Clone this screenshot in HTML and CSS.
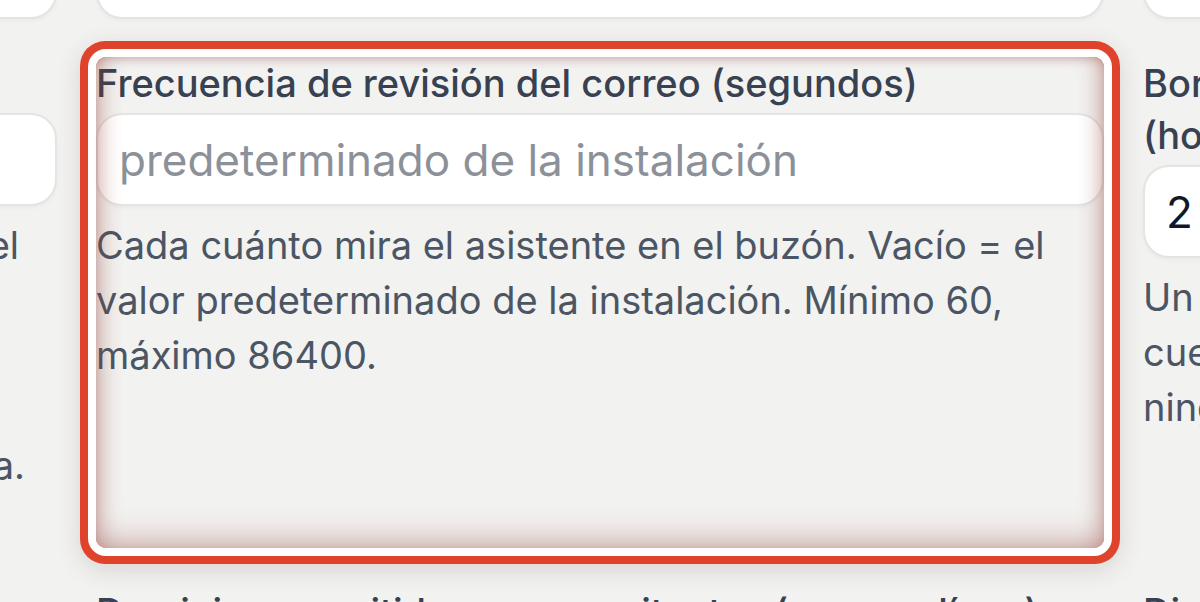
FILE: index.html
```html
<!DOCTYPE html>
<html lang="es">
<head>
<meta charset="utf-8">
<title>Ajustes del buzón</title>
<link rel="stylesheet" href="styles.css">
</head>
<body>
<div class="form-grid">
  <div class="field"><input class="input input-top" type="text" placeholder="imap.ejemplo.com"></div>
  <div class="field"><input class="input input-top" type="text"></div>
  <div class="field"><input class="input input-top" type="text"></div>

  <div class="field">
    <label class="label" for="carpeta">Carpeta</label>
    <input class="input" id="carpeta" type="text" placeholder="INBOX">
    <p class="hint hint-ends">
      <span class="ln">Carpeta IMAP que revisa el asistente en el</span>
      <span class="ln ln-off">servidor. Puede ser una subcarpeta</span>
      <span class="ln ln-off">separada con barra o punto, según</span>
      <span class="ln ln-off">el proveedor. Vacío = INBOX, la</span>
      <span class="ln ln-long">carpeta de entrada predeterminada.</span>
      <span class="ln ln-off">Distingue mayúsculas.</span>
    </p>
  </div>

  <div class="field field-focus">
    <label class="label" for="frecuencia">Frecuencia de revisión del correo (segundos)</label>
    <input class="input" id="frecuencia" type="text" placeholder="predeterminado de la instalación">
    <p class="hint">Cada cuánto mira el asistente en el buzón. Vacío = el valor predeterminado de la instalación. Mínimo 60, máximo 86400.</p>
  </div>

  <div class="field">
    <label class="label" for="borrar">Borrar borradores no enviados tras<br>(horas)</label>
    <input class="input input-value" id="borrar" type="text" value="2">
    <p class="hint">Un borrador sin revisar se elimina pasado este<br>cuenta de horas. Se aplica a todas las cuentas. 0 =<br>ninguno.</p>
  </div>

  <div class="field"><span class="label">Firma</span></div>
  <div class="field"><span class="label">Dominios permitidos para remitentes (uno por línea)</span></div>
  <div class="field"><span class="label">Dirección de respuesta</span></div>
</div>
</body>
</html>
```

FILE: styles.css
```css
* {
  box-sizing: border-box;
}

html,
body {
  margin: 0;
  height: 100%;
}

body {
  background: #f2f2f0;
  overflow: hidden;
  font-family: Inter, "Noto Sans", "Liberation Sans", sans-serif;
}

.form-grid {
  display: grid;
  grid-template-columns: repeat(3, 1008px);
  column-gap: 39px;
  row-gap: 38px;
  margin-left: -951px;
  margin-top: -74px;
}

.field {
  display: flex;
  flex-direction: column;
  min-width: 0;
}

.label {
  display: block;
  font-size: 38px;
  font-weight: 500;
  line-height: 52px;
  color: #374151;
}

.input {
  display: block;
  width: 100%;
  height: 93px;
  margin: 4px 0 0;
  padding: 0 21px;
  border: 2px solid #e4e4e2;
  border-radius: 26px;
  background: #fff;
  font-family: Inter, "Noto Sans", sans-serif;
  font-size: 44px;
  font-weight: 400;
  color: #111827;
  box-shadow: 0 2px 4px rgba(0, 0, 0, 0.035);
  outline: none;
}

.input-top {
  margin-top: 0;
}

.input::placeholder {
  color: #8c9199;
  opacity: 1;
}

.hint {
  margin: 12px 0 0;
  font-size: 38px;
  line-height: 55px;
  color: #4b5563;
}

.hint-ends {
  text-align: right;
  padding-right: 38px;
}

.hint-ends .ln {
  display: block;
}

.hint-ends .ln-long {
  margin-right: -6px;
}

.hint-ends .ln-off {
  padding-right: 140px;
}

.field-focus {
  position: relative;
  border-radius: 10px;
  box-shadow:
    0 0 0 8px #ffffff,
    0 0 0 16px #e0432b,
    0 6px 24px 16px rgba(70, 40, 40, 0.14);
}

.field-focus::after {
  content: "";
  position: absolute;
  inset: 0;
  border-radius: 10px;
  pointer-events: none;
  box-shadow:
    inset 0 -14px 30px -6px rgba(150, 70, 60, 0.36),
    inset 0 5px 10px -4px rgba(150, 70, 60, 0.3),
    inset 14px 0 20px -10px rgba(150, 70, 60, 0.3),
    inset -14px 0 20px -10px rgba(150, 70, 60, 0.3);
}
```
